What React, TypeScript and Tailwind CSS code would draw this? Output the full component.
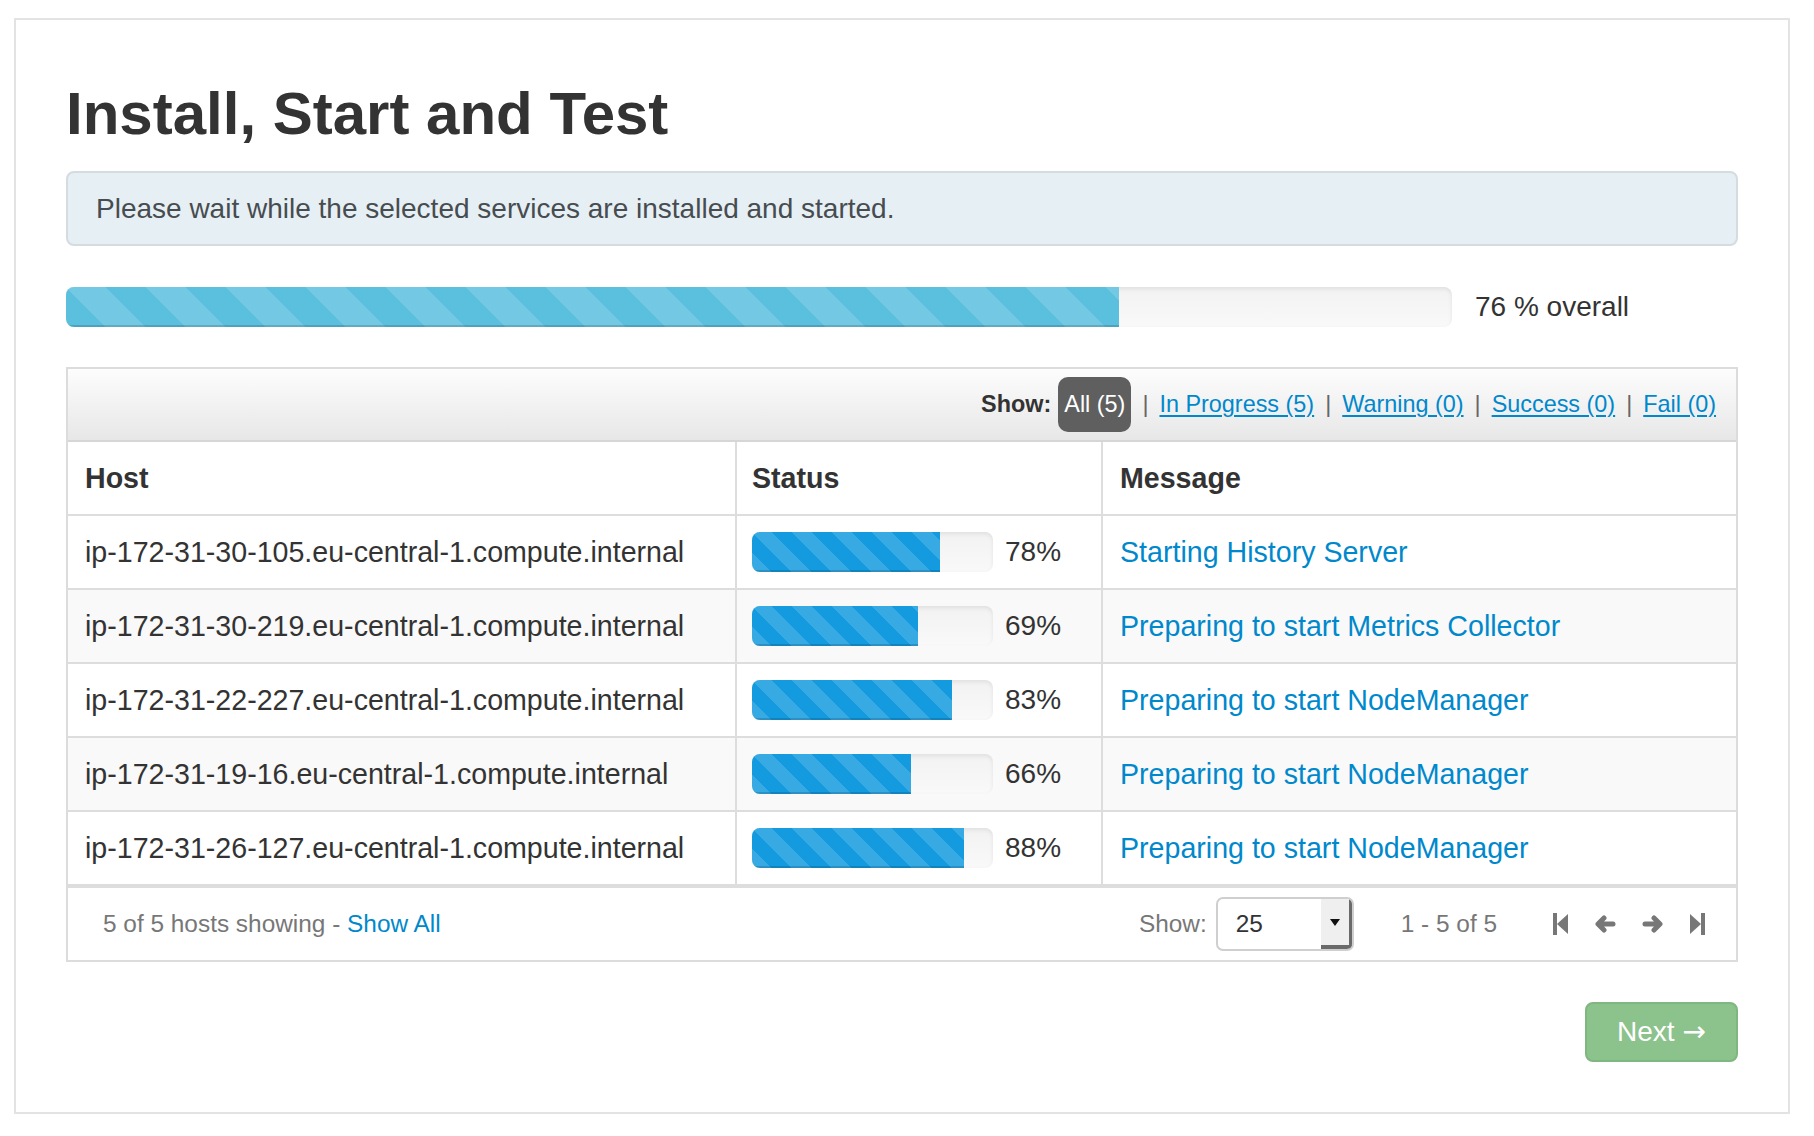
import React from 'react';

interface HostRow {
  host: string;
  progress: number;
  message: string;
}

const hosts: HostRow[] = [
  { host: 'ip-172-31-30-105.eu-central-1.compute.internal', progress: 78, message: 'Starting History Server' },
  { host: 'ip-172-31-30-219.eu-central-1.compute.internal', progress: 69, message: 'Preparing to start Metrics Collector' },
  { host: 'ip-172-31-22-227.eu-central-1.compute.internal', progress: 83, message: 'Preparing to start NodeManager' },
  { host: 'ip-172-31-19-16.eu-central-1.compute.internal', progress: 66, message: 'Preparing to start NodeManager' },
  { host: 'ip-172-31-26-127.eu-central-1.compute.internal', progress: 88, message: 'Preparing to start NodeManager' },
];

const filters = ['In Progress (5)', 'Warning (0)', 'Success (0)', 'Fail (0)'];

const FirstIcon = () => (
  <svg width="15" height="22" viewBox="0 0 15 22" fill="#777">
    <rect x="0" y="0" width="4" height="22" />
    <path d="M4 11 L15 1 V21 Z" />
  </svg>
);

const LastIcon = () => (
  <svg width="15" height="22" viewBox="0 0 15 22" fill="#777">
    <path d="M0 1 L11 11 L0 21 Z" />
    <rect x="11" y="0" width="4" height="22" />
  </svg>
);

const ArrowIcon = ({ flip }: { flip?: boolean }) => (
  <svg width="22" height="18" viewBox="0 0 22 18" className={flip ? 'scale-x-[-1]' : ''}>
    <path d="M19 9 H5 M10 3 L4 9 L10 15" fill="none" stroke="#777" strokeWidth="5" strokeLinecap="round" strokeLinejoin="round" />
  </svg>
);

export default function App() {
  const overall = 76;

  return (
    <div className="min-h-screen bg-white pt-[18px] pl-[14px] font-['Liberation_Sans',Arial,sans-serif] text-[#333]">
      <div className="w-[1776px] border-2 border-[#e3e3e3] px-[50px] pt-[61px] pb-[50px]">
        {/* Header */}
        <h1 className="text-[60px] leading-[66px] font-bold text-[#333]">Install, Start and Test</h1>

        <div className="mt-[24px] h-[75px] rounded-[8px] border-2 border-[#d4dce0] bg-[#e6f0f4] pl-[28px] flex items-center text-[28px] text-[#474c51]">
          Please wait while the selected services are installed and started.
        </div>

        {/* Overall progress */}
        <div className="mt-[40px] flex items-center">
          <div className="w-[1386px] h-[40px] rounded-[8px] bg-linear-to-b from-[#f2f2f2] to-[#f9f9f9] shadow-[inset_0_2px_4px_rgba(0,0,0,0.08)] overflow-hidden">
            <div
              className="h-full bg-[#5bc0de] bg-[linear-gradient(45deg,rgba(255,255,255,0.15)_25%,transparent_25%,transparent_50%,rgba(255,255,255,0.15)_50%,rgba(255,255,255,0.15)_75%,transparent_75%,transparent)] bg-[length:80px_80px] shadow-[inset_0_-2px_0_rgba(0,0,0,0.15)]"
              style={{ width: `${overall}%` }}
            />
          </div>
          <span className="ml-[23px] text-[28px] text-[#333]">{overall} % overall</span>
        </div>

        {/* Hosts table */}
        <div className="mt-[39px] border-2 border-[#dcdcdc]">
          <div className="h-[73px] border-b-2 border-[#d6d6d6] bg-linear-to-b from-[#fdfdfd] to-[#e7e7e7] flex items-center justify-end pr-[20px] text-[23.4px]">
            <span className="font-bold text-[#333] mr-[7px]">Show:</span>
            <span className="h-[55px] px-[6px] rounded-[10px] bg-[#5f5f5f] text-white flex items-center">All (5)</span>
            {filters.map((f) => (
              <React.Fragment key={f}>
                <span className="text-[#666] mx-[11px]">|</span>
                <a className="text-[#0088cc] underline underline-offset-[3px] decoration-[2px]" href="#">{f}</a>
              </React.Fragment>
            ))}
          </div>

          <div className="grid grid-cols-[667px_366px_1fr] h-[74px] border-b-2 border-[#dddddd] text-[28.6px] font-bold text-[#333]">
            <div className="flex items-center pl-[17px]">Host</div>
            <div className="flex items-center pl-[15px] border-l-2 border-[#dddddd]">Status</div>
            <div className="flex items-center pl-[17px] border-l-2 border-[#dddddd]">Message</div>
          </div>

          {hosts.map((h, i) => (
            <div
              key={h.host}
              className={`grid grid-cols-[667px_366px_1fr] h-[74px] border-b-2 border-[#dddddd] text-[28.6px] ${i % 2 === 1 ? 'bg-[#f9f9f9]' : 'bg-white'}`}
            >
              <div className="flex items-center pl-[17px] text-[#333]">{h.host}</div>
              <div className="flex items-center pl-[15px] border-l-2 border-[#dddddd]">
                <div className="w-[241px] h-[40px] rounded-[8px] bg-linear-to-b from-[#f2f2f2] to-[#f9f9f9] shadow-[inset_0_2px_4px_rgba(0,0,0,0.08)] overflow-hidden">
                  <div
                    className="h-full bg-[#149bdf] bg-[linear-gradient(45deg,rgba(255,255,255,0.15)_25%,transparent_25%,transparent_50%,rgba(255,255,255,0.15)_50%,rgba(255,255,255,0.15)_75%,transparent_75%,transparent)] bg-[length:40px_40px] shadow-[inset_0_-2px_0_rgba(0,0,0,0.15)]"
                    style={{ width: `${h.progress}%` }}
                  />
                </div>
                <span className="ml-[12px] text-[#333] text-[28px]">{h.progress}%</span>
              </div>
              <div className="flex items-center pl-[17px] border-l-2 border-[#dddddd]">
                <a href="#" className="text-[#0088cc]">{h.message}</a>
              </div>
            </div>
          ))}

          <div className="h-[74px] border-t-2 border-[#dddddd] flex items-center pl-[35px] pr-[31px] text-[24.4px] text-[#777]">
            <span>
              5 of 5 hosts showing - <a href="#" className="text-[#0088cc]">Show All</a>
            </span>
            <div className="ml-auto flex items-center">
              <span className="mr-[9px]">Show:</span>
              <div className="w-[138px] h-[54px] rounded-[7px] border-2 border-[#cfcfcf] bg-white flex overflow-hidden">
                <span className="flex-1 flex items-center pl-[18px] text-[#333]">25</span>
                <span className="w-[31px] bg-[#efefef] border-r-[3px] border-b-[4px] border-[#6a6a6a] flex items-center justify-center">
                  <svg width="10" height="7" viewBox="0 0 10 7"><path d="M0 0 H10 L5 7 Z" fill="#111" /></svg>
                </span>
              </div>
              <span className="ml-[47px] mr-[56px]">1 - 5 of 5</span>
              <div className="flex items-center gap-[26px]">
                <FirstIcon />
                <ArrowIcon />
                <ArrowIcon flip />
                <LastIcon />
              </div>
            </div>
          </div>
        </div>

        {/* Next */}
        <div className="mt-[40px] flex justify-end">
          <button className="w-[153px] h-[60px] rounded-[8px] border-2 border-[#80b680] bg-[#8cc28c] text-white text-[28px] flex items-center justify-center">
            Next<span className="ml-[8px] font-['DejaVu_Sans',sans-serif]">→</span>
          </button>
        </div>
      </div>
    </div>
  );
}
